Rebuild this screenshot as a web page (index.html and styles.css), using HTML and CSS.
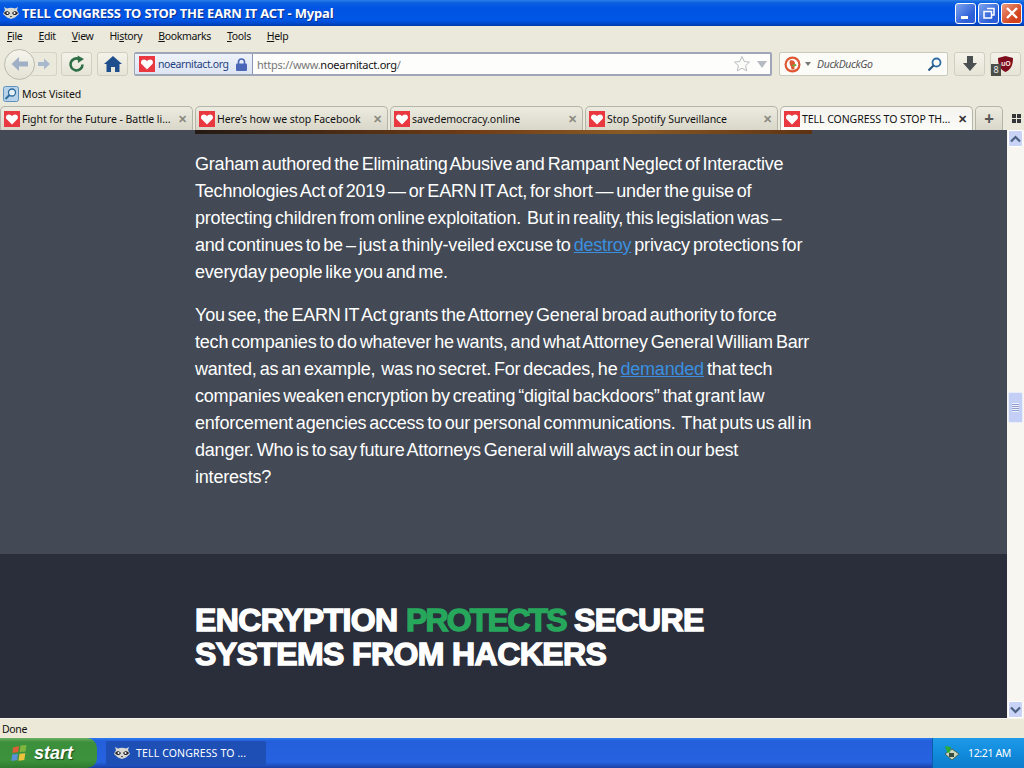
FILE: index.html
```html
<!DOCTYPE html>
<html lang="en">
<head>
<meta charset="utf-8">
<title>TELL CONGRESS TO STOP THE EARN IT ACT - Mypal</title>
<link rel="stylesheet" href="styles.css">
</head>
<body>
<svg class="defs" width="0" height="0" aria-hidden="true">
  <symbol id="fav" viewBox="0 0 16 16"><rect width="16" height="16" fill="#e9383f"/><path d="M8 13.500 2.800 8.300C1.200 6.500 2.200 3.400 4.900 3.400c1.400 0 2.400.8 3.100 1.800.7-1 1.700-1.800 3.100-1.800 2.700 0 3.700 3.100 2.100 4.900z" fill="#fff"/></symbol>
  <symbol id="coon" viewBox="0 0 16 16"><path d="M2 5 1 2l3 1.500C6 2.600 10 2.600 12 3.500L15 2l-1 3 2 4-4 3.500-4 1.500-4-1.500L0 9z" fill="#d9d9d4"/><path d="M1 8c2-2.500 4-2.500 6 0-1 2.500-4 3-6 0zM9 8c2-2.500 4-2.500 6 0-2 3-5 2.500-6 0z" fill="#23242a"/><circle cx="4.500" cy="8" r="1" fill="#fff"/><circle cx="11.500" cy="8" r="1" fill="#fff"/><path d="M7 11h2l-1 1.500z" fill="#111"/></symbol>
</svg>
<div class="window">
  <header class="titlebar">
    <svg class="title-icon"><use href="#coon"/></svg>
    <span class="title-text">TELL CONGRESS TO STOP THE EARN IT ACT - Mypal</span>
    <div class="caption">
      <span class="cap cap-min"><i></i></span>
      <span class="cap cap-max"><svg width="14" height="14" viewBox="0 0 14 14"><path d="M5 2.500h7v6.500h-2M2 5.500h7.500V12H2z" fill="none" stroke="#fff" stroke-width="1.500"/></svg></span>
      <span class="cap cap-close"><svg width="14" height="14" viewBox="0 0 14 14"><path d="M2 2l10 10M12 2 2 12" stroke="#fff" stroke-width="2.400"/></svg></span>
    </div>
  </header>

  <nav class="menubar">
    <span><u>F</u>ile</span><span><u>E</u>dit</span><span><u>V</u>iew</span><span>Hi<u>s</u>tory</span><span><u>B</u>ookmarks</span><span><u>T</u>ools</span><span><u>H</u>elp</span>
  </nav>

  <div class="navbar">
    <div class="backfwd">
      <span class="back"><svg width="20" height="18" viewBox="0 0 20 18"><path d="M1.500 9 9 2v4.500h9v5H9V16z" fill="#9fb0c6"/></svg></span>
      <span class="fwd"><svg width="14" height="14" viewBox="0 0 14 14"><path d="M13 7 7 1.500V5H1v4h6v3.500z" fill="#a9b9cd"/></svg></span>
    </div>
    <button class="tbtn reload"><svg width="18" height="18" viewBox="0 0 18 18"><path d="M14.500 9.500A6 6 0 1 1 11 4" fill="none" stroke="#2f6f47" stroke-width="2.600"/><path d="M9.500 0.500 16 4l-6 4z" fill="#2f6f47"/></svg></button>
    <button class="tbtn home"><svg width="18" height="16" viewBox="0 0 18 16"><path d="M9 0 0 8h2.500v8h4.500v-5h4v5h4.500V8H18z" fill="#1f4e8c"/></svg></button>
    <div class="urlbar">
      <div class="identity">
        <svg class="fav"><use href="#fav"/></svg>
        <span class="site">noearnitact.org</span>
        <svg class="lock" width="11" height="13" viewBox="0 0 11 13"><path d="M2.500 6V4a3 3 0 0 1 6 0v2" fill="none" stroke="#4b68b8" stroke-width="1.600"/><rect y="5.500" width="11" height="7.500" rx="1" fill="#4b68b8"/></svg>
      </div>
      <div class="url"><span class="url-dim">https://www.</span>noearnitact.org<span class="url-dim">/</span></div>
      <svg class="star" width="18" height="18" viewBox="0 0 18 18"><path d="M9 1.500l2.300 5 5.200.6-3.900 3.500 1.100 5.300L9 13.200l-4.700 2.700 1.100-5.300L1.500 7.100l5.200-.6z" fill="#fbfbf8" stroke="#b9bcc2"/></svg>
      <span class="drop"></span>
    </div>
    <div class="searchbar">
      <svg class="ddg" width="17" height="17" viewBox="0 0 17 17"><circle cx="8.500" cy="8.500" r="8" fill="#de5833"/><circle cx="8.500" cy="8.500" r="5.800" fill="#fff"/><path d="M6 4.500c3-1 5 .5 5 3 0 2-1 3-.5 6H7.500C7.500 10 4.500 8 6 4.500z" fill="#de5833"/><path d="M8 9l4-1 .5 2-4 .5z" fill="#6cae3e"/></svg>
      <span class="search-caret"></span>
      <span class="search-text">DuckDuckGo</span>
      <svg class="glass" width="15" height="15" viewBox="0 0 15 15"><circle cx="9.500" cy="5.500" r="4" fill="none" stroke="#2f6ea3" stroke-width="1.800"/><path d="M6.500 8.500 1.500 13.500" stroke="#24557f" stroke-width="2.200"/></svg>
    </div>
    <button class="tbtn dl"><svg width="16" height="16" viewBox="0 0 16 16"><path d="M5 0h6v7h4l-7 8-7-8h4z" fill="#4a4f52"/></svg></button>
    <button class="tbtn ub">
      <svg width="15" height="16" viewBox="0 0 15 16"><path d="M7.500 0 15 2c0 7-2 11.500-7.500 14C2 13.500 0 9 0 2z" fill="#7d0d1c"/></svg>
      <span class="ub-label">uO</span>
      <span class="badge">8</span>
    </button>
  </div>

  <div class="bookmarks">
    <svg width="16" height="16" viewBox="0 0 16 16"><rect x="0.500" y="0.500" width="15" height="15" rx="2" fill="#b9d4ea" stroke="#5f93bf"/><circle cx="9" cy="6.500" r="3.500" fill="#e8f1f7" stroke="#2e6c9e" stroke-width="1.300"/><path d="M6.500 9 2.500 13" stroke="#2e6c9e" stroke-width="2"/></svg>
    <span>Most Visited</span>
  </div>

  <div class="tabstrip">
    <div class="tab"><svg class="fav"><use href="#fav"/></svg><span class="tab-label">Fight for the Future - Battle li...</span><span class="tab-x">✕</span></div>
    <div class="tab"><svg class="fav"><use href="#fav"/></svg><span class="tab-label">Here’s how we stop Facebook</span><span class="tab-x">✕</span></div>
    <div class="tab"><svg class="fav"><use href="#fav"/></svg><span class="tab-label">savedemocracy.online</span><span class="tab-x">✕</span></div>
    <div class="tab"><svg class="fav"><use href="#fav"/></svg><span class="tab-label">Stop Spotify Surveillance</span><span class="tab-x">✕</span></div>
    <div class="tab tab-active"><svg class="fav"><use href="#fav"/></svg><span class="tab-label">TELL CONGRESS TO STOP TH...</span><span class="tab-x">✕</span></div>
    <div class="tab tab-new">+</div>
    <div class="tab-grid"><i></i><i></i><i></i><i></i></div>
  </div>

  <main class="viewport">
    <div class="page">
      <section class="article">
        <div class="strip"></div>
        <p>Graham authored the Eliminating Abusive and Rampant Neglect of Interactive<br>Technologies Act of 2019 — or EARN IT Act, for short — under the guise of<br>protecting children from online exploitation.&nbsp; But in reality, this legislation was –<br>and continues to be – just a thinly-veiled excuse to <a href="#">destroy</a> privacy protections for<br>everyday people like you and me.</p>
        <p>You see, the EARN IT Act grants the Attorney General broad authority to force<br>tech companies to do whatever he wants, and what Attorney General William Barr<br>wanted, as an example,&nbsp; was no secret. For decades, he <a href="#">demanded</a> that tech<br>companies weaken encryption by creating “digital backdoors” that grant law<br>enforcement agencies access to our personal communications.&nbsp; That puts us all in<br>danger. Who is to say future Attorneys General will always act in our best<br>interests?</p>
      </section>
      <section class="dark">
        <h2>ENCRYPTION <em>PROTECTS</em> SECURE<br>SYSTEMS FROM HACKERS</h2>
      </section>
    </div>
    <div class="scrollbar">
      <span class="sb-btn"><svg width="11" height="8" viewBox="0 0 11 8"><path d="M1 6.500 5.500 2 10 6.500" fill="none" stroke="#4d6185" stroke-width="2.200"/></svg></span>
      <div class="sb-track"><span class="sb-thumb"><i></i></span></div>
      <span class="sb-btn"><svg width="11" height="8" viewBox="0 0 11 8"><path d="M1 1.500 5.500 6 10 1.500" fill="none" stroke="#4d6185" stroke-width="2.200"/></svg></span>
    </div>
  </main>

  <div class="statusbar">Done</div>

  <footer class="taskbar">
    <div class="start">
      <svg width="18" height="18" viewBox="0 0 18 18"><path d="M2 3.500 8 2l-.8 6L1.500 9z" fill="#dd5f35"/><path d="M9.500 1.500l6-.5-1 6.500-5.800.5z" fill="#7fb63f"/><path d="M1.200 10.500 7 9.800 6.200 16l-5.800 1z" fill="#5b8fd6"/><path d="M8.500 9.700l5.800-.5-1 6.800-5.800.8z" fill="#eec23c"/></svg>
      <span>start</span>
    </div>
    <div class="task"><svg class="task-icon"><use href="#coon"/></svg><span>TELL CONGRESS TO ...</span></div>
    <div class="tray">
      <svg width="16" height="16" viewBox="0 0 16 16"><path d="M1 9l7-5 7 5-7 6z" fill="#c8d6c0" stroke="#39583a" stroke-width=".8"/><path d="M1 1l6 1-1.500 6L3 7z" fill="#2eaa36"/><rect x="5" y="8" width="5" height="4" fill="#3a4a3e"/></svg>
      <span>12:21 AM</span>
    </div>
  </footer>
</div>
</body>
</html>
```

FILE: styles.css
```css
* { box-sizing: border-box; }
html, body { margin: 0; height: 100%; overflow: hidden; }
body { font-family: "Noto Sans", "Liberation Sans", sans-serif; font-size: 10.5px; letter-spacing: -.35px; color: #111; }
.defs { position: absolute; }
button { padding: 0; font: inherit; letter-spacing: inherit; }

.window { display: flex; flex-direction: column; width: 1024px; height: 768px; background: #ebe9db; }

.titlebar { display: flex; align-items: center; flex: 0 0 26px; padding: 0 2px 0 3px; color: #fff;
  background: linear-gradient(#2b7de8 0, #0a5fe0 3px, #0054e3 8px, #0056e6 20px, #0146c4 24px, #003aa8 26px); }
.title-icon { width: 16px; height: 16px; }
.title-text { margin-left: 3px; font-size: 13px; font-weight: 700; letter-spacing: -.18px; text-shadow: 1px 1px 0 #0a2f8c; }
.caption { display: flex; gap: 2px; margin-left: auto; }
.cap { display: flex; align-items: center; justify-content: center; width: 21px; height: 21px; border: 1px solid #fff; border-radius: 3px;
  background: linear-gradient(135deg, #7ea4ee, #2c5fd8 70%); }
.cap-min { align-items: flex-end; justify-content: flex-start; padding: 0 0 4px 5px; }
.cap-min i { display: block; width: 7px; height: 3px; background: #fff; }
.cap-close { background: linear-gradient(135deg, #eb9b80, #d2421c 70%); }

.menubar { display: flex; flex: 0 0 22px; align-items: center; padding: 0 0 2px 7px; gap: 16px; }

.navbar { display: flex; flex: 0 0 32px; align-items: center; padding-left: 4px; }
.backfwd { display: flex; align-items: center; width: 54px; }
.back { display: flex; align-items: center; justify-content: center; flex: 0 0 31px; height: 31px; border: 1px solid #b9bab0; border-radius: 50%;
  background: linear-gradient(#f6f5ec, #e4e2d4); position: relative; z-index: 1; }
.fwd { display: flex; align-items: center; justify-content: flex-start; flex: 0 0 26px; height: 24px; margin-left: -4px; padding-left: 6px; border: 1px solid #d5d4c7; border-left: 0; border-radius: 0 3px 3px 0; }
.tbtn { display: flex; align-items: center; justify-content: center; height: 24px; border: 1px solid #cfcec1; border-radius: 3px; background: linear-gradient(#f4f3ea, #e6e4d6); }
.reload { width: 31px; margin-left: 3px; }
.home { width: 31px; margin-left: 5px; }

.urlbar { display: flex; align-items: center; width: 638px; height: 24px; margin-left: 6px; border: 1px solid #9ea6b8; border-width: 2px 2px 2px 1px; border-radius: 2px; background: #fdfdfb; }
.identity { display: flex; align-items: center; flex: 0 0 118px; height: 100%; padding-left: 4px; background: linear-gradient(#eef2f9, #dde5f3); border-right: 1px solid #8b97b5; }
.fav { flex: none; width: 16px; height: 16px; }
.site { margin-left: 3px; color: #1f3f80; font-size: 10.5px; letter-spacing: -.4px; }
.lock { margin-left: 7px; }
.url { margin-left: 4px; font-size: 11px; letter-spacing: -.25px; color: #111; }
.url-dim { color: #777; }
.star { margin-left: auto; }
.drop { width: 0; height: 0; margin: 0 3px 0 6px; border: 5.5px solid transparent; border-top: 7px solid #b6bac2; border-bottom: 0; }

.searchbar { display: flex; align-items: center; width: 169px; height: 24px; margin-left: 7px; padding: 0 5px 0 4px; border: 1px solid #c9c9bd; border-radius: 2px; background: #fbfbf8; }
.search-caret { width: 0; height: 0; margin-left: 4px; border: 3px solid transparent; border-top: 4px solid #777; border-bottom: 0; }
.search-text { margin-left: 6px; color: #555; font-style: italic; }
.glass { margin-left: auto; }
.dl { width: 31px; margin-left: 6px; }
.ub { position: relative; width: 31px; margin-left: 5px; }
.ub-label { position: absolute; left: 10px; top: 6px; color: #f3d8d8; font-size: 7px; font-weight: 700; }
.badge { position: absolute; left: 0; bottom: -1px; width: 10px; height: 12px; background: #4b4f47; color: #eee; font-size: 9px; line-height: 12px; text-align: center; }

.bookmarks { display: flex; flex: 0 0 26px; align-items: center; gap: 3px; padding: 2px 0 0 3px; letter-spacing: -.1px; }

.tabstrip { display: flex; flex: 0 0 24px; align-items: stretch; gap: 2px; position: relative; z-index: 1; letter-spacing: -.05px; }
.tab { display: flex; align-items: center; flex: 0 0 193px; min-width: 0; padding: 0 3px 0 3px; border: 1px solid #b5b4a8; border-bottom: 0; border-radius: 5px 5px 0 0; background: linear-gradient(#ecebe0, #d9d7c9); }
.tab-label { margin-left: 2px; white-space: nowrap; }
.tab-x { margin-left: auto; padding-right: 2px; color: #8a8a80; font-size: 11px; font-weight: 700; letter-spacing: 0; }
.tab-active { background: linear-gradient(#f4f3ee, #fbfbf8); }
.tab-active .tab-x { color: #333; }
.tab-new { flex: 0 0 28px; justify-content: center; padding: 0; font-size: 17px; font-weight: 700; color: #555; }
.tab-grid { display: grid; grid-template-columns: 4px 4px; grid-auto-rows: 4px; gap: 1px; align-self: center; margin-left: 7px; }
.tab-grid i { background: #34363a; }

.viewport { display: flex; flex: 1; min-height: 0; overflow: hidden; }
.page { flex: 1; min-width: 0; overflow: hidden; background: #292e3a; }
.article { height: 424px; padding: 0 195px; background: #434a55; color: #fff; font-family: "Liberation Sans", Arial, sans-serif; font-size: 18px; line-height: 27px; letter-spacing: -.2px; word-spacing: -1.8px; }
.strip { width: 617px; height: 4px; margin-bottom: 17px; background: linear-gradient(90deg, #241a14, #6f3c16 45%, #8a5a24 70%, #5d3212); }
.article p { margin: 0 0 16px; white-space: nowrap; }
.article a { color: #3a8fe0; }
.dark { padding: 49px 195px 0; }
.dark h2 { margin: 0; color: #fff; font-family: "Liberation Sans", Arial, sans-serif; font-size: 32px; line-height: 34px; font-weight: 700; letter-spacing: -.6px; -webkit-text-stroke: 1.4px currentColor; white-space: nowrap; }
.dark em { font-style: normal; color: #27a75c; letter-spacing: -1.8px; }

.scrollbar { display: flex; flex-direction: column; flex: 0 0 17px; background: #f7f6f0; }
.sb-btn { display: flex; align-items: center; justify-content: center; flex: 0 0 17px; margin: 0 1px; border: 1px solid #fff; border-radius: 2px; background: #c9d3f5; }
.sb-track { flex: 1; padding-top: 245px; }
.sb-thumb { display: flex; align-items: center; justify-content: center; width: 15px; height: 31px; margin-left: 1px; border-radius: 2px; background: #c3cff5; border: 1px solid #e9edfb; }
.sb-thumb i { display: block; width: 7px; height: 9px; background: repeating-linear-gradient(#eef1fc 0, #eef1fc 1px, #8f9fd0 1px, #8f9fd0 2px); }

.statusbar { display: flex; flex: 0 0 20px; align-items: center; padding-left: 2px; background: #ece9d8; border-top: 1px solid #f7f6ef; }

.taskbar { display: flex; flex: 0 0 30px; align-items: center; color: #fff; background: linear-gradient(#2a7cf0 0, #245edb 3px, #2663e0 24px, #1941a5 30px); }
.start { display: flex; align-items: center; gap: 5px; width: 97px; height: 30px; padding-left: 11px; border-radius: 0 10px 10px 0; background: linear-gradient(#6fb268 0, #3c8f3c 4px, #3c933c 22px, #2f7a2f 30px); font-family: "Liberation Sans", Arial, sans-serif; font-size: 18px; font-weight: 700; font-style: italic; letter-spacing: 0; text-shadow: 1px 1px 1px #1a4a1a; }
.task { display: flex; align-items: center; gap: 6px; width: 160px; height: 24px; margin-left: 9px; padding-left: 8px; border-radius: 2px; background: #1d4fb5; letter-spacing: .15px; }
.task-icon { width: 16px; height: 16px; }
.tray { display: flex; align-items: center; gap: 8px; width: 92px; height: 30px; margin-left: auto; padding-left: 11px; background: linear-gradient(#1f9ae8, #118bdc 50%, #0f7ccc); border-left: 1px solid #0c5ea8; }
```
